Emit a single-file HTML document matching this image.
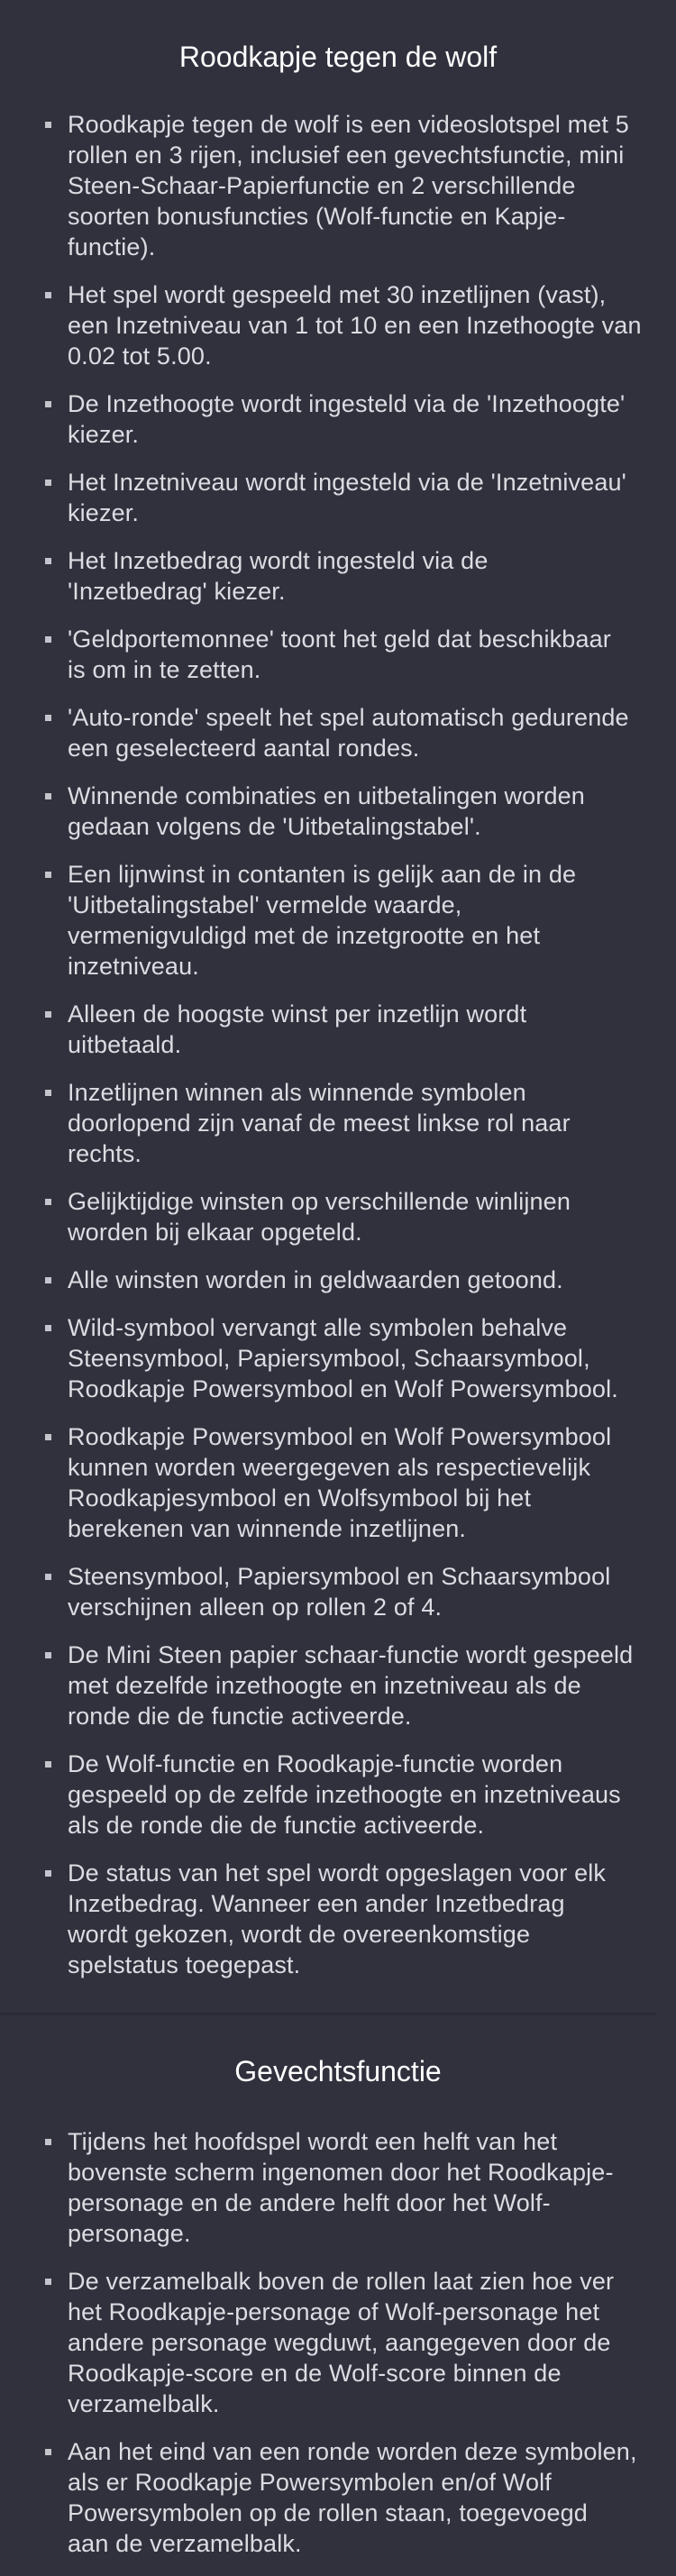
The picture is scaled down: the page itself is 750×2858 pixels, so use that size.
<!DOCTYPE html>
<html><head><meta charset="utf-8"><style>
html,body{margin:0;padding:0;}
body{width:750px;height:2808px;overflow:hidden;background:#31313e;font-family:"Liberation Sans",sans-serif;color:#dcdce2;position:relative;}
h1,h2{margin:0;text-align:center;color:#fff;font-weight:normal;font-size:32px;line-height:40px;}
h1{padding-top:43px;}
ul{list-style:none;margin:0;padding:0;}
li{position:relative;padding-left:75px;font-size:27px;line-height:34px;white-space:nowrap;margin-bottom:19px;letter-spacing:0.15px;}
li:before{content:"";position:absolute;left:50px;top:14px;width:7px;height:7px;background:#c4c4cc;}
ul.a{margin-top:38px;}
.div{position:absolute;left:0;top:2233px;width:728px;height:3px;background:#2a2a37;}
.sec2{position:absolute;left:0;top:2278px;width:750px;}
.sec2 ul{margin-top:41px;}
</style></head><body>
<h1>Roodkapje tegen de wolf</h1>
<ul class="a">
<li>Roodkapje tegen de wolf is een videoslotspel met 5<br>rollen en 3 rijen, inclusief een gevechtsfunctie, mini<br>Steen-Schaar-Papierfunctie en 2 verschillende<br>soorten bonusfuncties (Wolf-functie en Kapje-<br>functie).</li>
<li>Het spel wordt gespeeld met 30 inzetlijnen (vast),<br>een Inzetniveau van 1 tot 10 en een Inzethoogte van<br>0.02 tot 5.00.</li>
<li>De Inzethoogte wordt ingesteld via de 'Inzethoogte'<br>kiezer.</li>
<li>Het Inzetniveau wordt ingesteld via de 'Inzetniveau'<br>kiezer.</li>
<li>Het Inzetbedrag wordt ingesteld via de<br>'Inzetbedrag' kiezer.</li>
<li>'Geldportemonnee' toont het geld dat beschikbaar<br>is om in te zetten.</li>
<li>'Auto-ronde' speelt het spel automatisch gedurende<br>een geselecteerd aantal rondes.</li>
<li>Winnende combinaties en uitbetalingen worden<br>gedaan volgens de 'Uitbetalingstabel'.</li>
<li>Een lijnwinst in contanten is gelijk aan de in de<br>'Uitbetalingstabel' vermelde waarde,<br>vermenigvuldigd met de inzetgrootte en het<br>inzetniveau.</li>
<li>Alleen de hoogste winst per inzetlijn wordt<br>uitbetaald.</li>
<li>Inzetlijnen winnen als winnende symbolen<br>doorlopend zijn vanaf de meest linkse rol naar<br>rechts.</li>
<li>Gelijktijdige winsten op verschillende winlijnen<br>worden bij elkaar opgeteld.</li>
<li>Alle winsten worden in geldwaarden getoond.</li>
<li>Wild-symbool vervangt alle symbolen behalve<br>Steensymbool, Papiersymbool, Schaarsymbool,<br>Roodkapje Powersymbool en Wolf Powersymbool.</li>
<li>Roodkapje Powersymbool en Wolf Powersymbool<br>kunnen worden weergegeven als respectievelijk<br>Roodkapjesymbool en Wolfsymbool bij het<br>berekenen van winnende inzetlijnen.</li>
<li>Steensymbool, Papiersymbool en Schaarsymbool<br>verschijnen alleen op rollen 2 of 4.</li>
<li>De Mini Steen papier schaar-functie wordt gespeeld<br>met dezelfde inzethoogte en inzetniveau als de<br>ronde die de functie activeerde.</li>
<li>De Wolf-functie en Roodkapje-functie worden<br>gespeeld op de zelfde inzethoogte en inzetniveaus<br>als de ronde die de functie activeerde.</li>
<li>De status van het spel wordt opgeslagen voor elk<br>Inzetbedrag. Wanneer een ander Inzetbedrag<br>wordt gekozen, wordt de overeenkomstige<br>spelstatus toegepast.</li>
</ul>
<div class="div"></div>
<div class="sec2">
<h2>Gevechtsfunctie</h2>
<ul>
<li>Tijdens het hoofdspel wordt een helft van het<br>bovenste scherm ingenomen door het Roodkapje-<br>personage en de andere helft door het Wolf-<br>personage.</li>
<li>De verzamelbalk boven de rollen laat zien hoe ver<br>het Roodkapje-personage of Wolf-personage het<br>andere personage wegduwt, aangegeven door de<br>Roodkapje-score en de Wolf-score binnen de<br>verzamelbalk.</li>
<li>Aan het eind van een ronde worden deze symbolen,<br>als er Roodkapje Powersymbolen en/of Wolf<br>Powersymbolen op de rollen staan, toegevoegd<br>aan de verzamelbalk.</li>
</ul>
</div>
</body></html>
